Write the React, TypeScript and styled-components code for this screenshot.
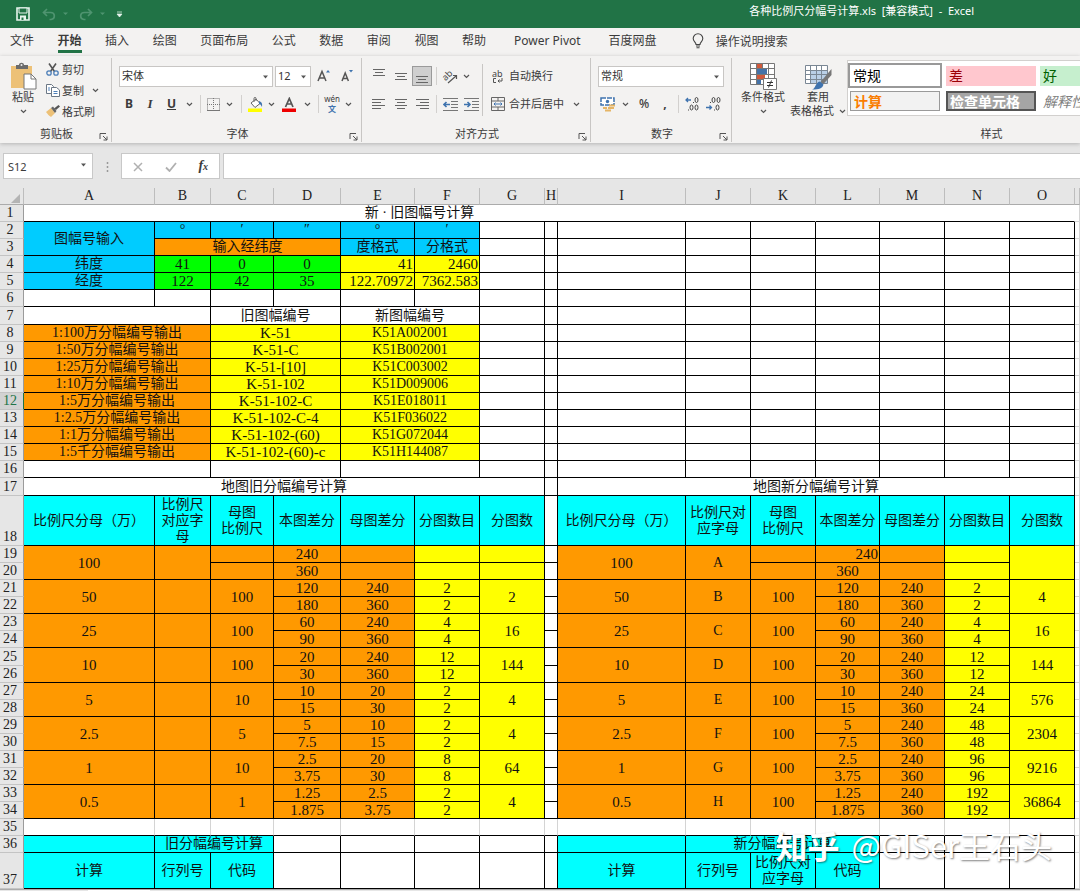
import React from "react";
import styled, { createGlobalStyle, css } from "styled-components";

const UI = '"Noto Sans", "Noto Sans CJK SC", sans-serif';
const SONG = '"Liberation Serif", "Noto Sans CJK SC", serif';

const GlobalStyle = createGlobalStyle`
  * { box-sizing: border-box; }
  body { margin: 0; background: #e6e6e6; font-family: ${UI}; color: #3b3b3b; }
  button, input, select { font: inherit; color: inherit; margin: 0; }
  button { padding: 0; border: 0; background: none; }
`;

const Page = styled.div`
  position: relative;
  display: flex;
  flex-direction: column;
  min-height: 100vh;
  overflow: hidden;
`;

/* ---------- title bar ---------- */
const TitleBar = styled.header`
  display: flex;
  align-items: center;
  height: 28px;
  padding-left: 16px;
  background: #217346;
  color: #fff;
`;
const QuickAccess = styled.div`
  display: flex;
  align-items: center;
  gap: 6px;
`;
const QuickButton = styled.button<{ $dim?: boolean; $lead?: number }>`
  display: flex;
  align-items: center;
  margin-left: ${(p) => p.$lead ?? 0}px;
  color: ${(p) => (p.$dim ? "#4f9470" : "#e8f5ee")};
`;
const DocTitle = styled.h1`
  flex: 1;
  margin: 0 106px 6px 0;
  text-align: right;
  font-size: 11px;
  line-height: 16px;
  font-weight: 400;
  white-space: pre;
`;

/* ---------- tabs ---------- */
const TabBar = styled.nav`
  display: flex;
  align-items: center;
  height: 28px;
  padding-left: 10px;
  background: #f3f2f1;
  font-size: 12px;
`;
const TabGroup = styled.div`
  display: flex;
  justify-content: space-between;
  width: 476px;
`;
const ExtraTabs = styled.div`
  display: flex;
  gap: 28px;
  margin-left: 28px;
`;
const Tab = styled.button<{ $active?: boolean }>`
  height: 22px;
  line-height: 18px;
  padding-top: 1px;
  border-bottom: 3px solid ${(p) => (p.$active ? "#217346" : "transparent")};
  font-weight: ${(p) => (p.$active ? 700 : 400)};
  white-space: nowrap;
`;
const TellMe = styled.button`
  display: flex;
  align-items: center;
  gap: 12px;
  height: 22px;
  padding-bottom: 2px;
  margin-left: 35px;
  white-space: nowrap;
`;

/* ---------- ribbon ---------- */
const Ribbon = styled.section`
  position: relative;
  display: flex;
  height: 87px;
  padding-top: 2px;
  background: #f3f2f1;
  box-shadow: 0 1px 4px #b4b4b4;
  font-size: 11px;
  line-height: 14px;
`;
const Group = styled.div<{ $w?: number }>`
  display: flex;
  flex-direction: column;
  flex: ${(p) => (p.$w ? `0 0 ${p.$w}px` : "1 0 0")};
  height: 84px;
  border-right: 1px solid ${(p) => (p.$w ? "#c8c6c4" : "transparent")};
`;
const GroupBody = styled.div`
  display: flex;
  flex: 1;
`;
const GroupFoot = styled.div<{ $lead?: number }>`
  display: flex;
  align-items: center;
  height: 16px;
  padding: 0 3px 0 ${(p) => p.$lead ?? 14}px;
  white-space: nowrap;
`;
const GroupLabel = styled.span`
  flex: 1;
  text-align: center;
`;
const Launcher = styled.button`
  display: flex;
  padding-top: 4px;
`;
const BigButton = styled.button<{ $w: number }>`
  display: flex;
  flex-direction: column;
  align-items: center;
  width: ${(p) => p.$w}px;
  height: 62px;
  padding-top: 4px;
  white-space: nowrap;
`;
const BigLabel = styled.span`
  display: flex;
  align-items: center;
  gap: 5px;
  height: 14px;
`;
const ClipList = styled.div`
  display: flex;
  flex-direction: column;
  gap: 4px;
  padding-top: 3px;
`;
const LabelButton = styled.button<{ $gap?: number }>`
  display: flex;
  align-items: center;
  gap: ${(p) => p.$gap ?? 2}px;
  height: 17px;
  white-space: nowrap;
`;
const Rows = styled.div<{ $pad: number }>`
  display: flex;
  flex-direction: column;
  gap: 8px;
  padding: 8px 0 0 ${(p) => p.$pad}px;
`;
const Row = styled.div<{ $gap?: number }>`
  display: flex;
  align-items: center;
  gap: ${(p) => p.$gap ?? 0}px;
  height: 20px;
`;
const Tool = styled.button<{ $w: number; $on?: boolean }>`
  display: flex;
  align-items: center;
  justify-content: center;
  width: ${(p) => p.$w}px;
  height: 20px;
  ${(p) => p.$on && css`
    background: #cfcfcf;
    border: 1px solid #9a9a9a;
  `}
`;
const Sep = styled.span<{ $w: number }>`
  display: flex;
  justify-content: center;
  width: ${(p) => p.$w}px;
  &::before {
    content: "";
    width: 1px;
    height: 18px;
    background: #d2d0ce;
  }
`;
const TallRule = styled.span`
  width: 1px;
  height: 52px;
  margin-top: 6px;
  background: #c8c6c4;
`;
const SelectBox = styled.label<{ $w: number }>`
  position: relative;
  display: flex;
  width: ${(p) => p.$w}px;
  height: 21px;
  border: 1px solid #c8c6c4;
  background: #fff;
  color: #333;
  select {
    appearance: none;
    width: 100%;
    padding: 0 12px 0 2px;
    border: 0;
    background: none;
    outline: 0;
  }
  svg {
    position: absolute;
    right: 3px;
    top: 8px;
    pointer-events: none;
  }
`;
const Glyph = styled.span<{ $kind?: "b" | "i" | "u" }>`
  font-size: 12px;
  font-weight: ${(p) => (p.$kind ? 700 : 500)};
  ${(p) => p.$kind === "i" && css`font-style: italic; font-family: "Liberation Serif", serif; font-size: 13px;`}
  ${(p) => p.$kind === "u" && css`text-decoration: underline;`}
`;
const Gallery = styled.div`
  display: grid;
  grid-template-columns: 94px 90px 90px;
  grid-template-rows: 25px 20px;
  gap: 3px 4px;
  align-items: center;
  flex: 1;
  height: 56px;
  margin: 2px 0 0 5px;
  padding: 2px 0 2px 0;
  border: 1px solid #d2d0ce;
  border-right: 0;
  background: #fff;
  overflow: hidden;
`;
const StyleCell = styled.button<{ $kind: string }>`
  height: 20px;
  padding-left: 3px;
  text-align: left;
  font: 14px/17px "Noto Sans CJK SC", sans-serif;
  white-space: nowrap;
  overflow: hidden;
  ${(p) => p.$kind === "normal" && css`height: 25px; color: #000; border: 2px solid #999; background: #fff;`}
  ${(p) => p.$kind === "bad" && css`color: #9c0006; background: #ffc7ce;`}
  ${(p) => p.$kind === "good" && css`color: #006100; background: #c6efce;`}
  ${(p) => p.$kind === "calc" && css`margin: 0 2px; color: #fa7d00; border: 1px solid #9a9a9a; background: #f2f2f2; font-weight: 700;`}
  ${(p) => p.$kind === "check" && css`color: #fff; border: 2px solid #555; background: #a5a5a5; font-weight: 700; padding-left: 2px; line-height: 15px;`}
  ${(p) => p.$kind === "note" && css`color: #7f7f7f; font-style: italic;`}
`;

/* ---------- formula bar ---------- */
const FormulaBar = styled.div`
  display: flex;
  height: 45px;
  padding: 10px 0 9px 3px;
`;
const NameBox = styled.div`
  position: relative;
  display: flex;
  width: 90px;
  border: 1px solid #c8c8c8;
  background: #fff;
  input {
    width: 100%;
    padding: 0 4px;
    border: 0;
    background: none;
    font-size: 11px;
  }
  svg {
    position: absolute;
    right: 5px;
    top: 9px;
  }
`;
const Dots = styled.span`
  display: flex;
  align-items: center;
  justify-content: center;
  width: 28px;
`;
const FxBox = styled.div`
  display: flex;
  align-items: center;
  justify-content: space-around;
  width: 99px;
  border: 1px solid #c8c8c8;
  background: #fff;
`;
const FormulaInput = styled.input`
  flex: 1;
  margin-left: 3px;
  border: 1px solid #c8c8c8;
  border-right: 0;
  background: #fff;
`;
const Fx = styled.button`
  font: italic 700 14px "Liberation Serif", serif;
  small { font-size: 10px; }
`;

/* ---------- sheet ---------- */
const Sheet = styled.table`
  width: 100%;
  table-layout: fixed;
  border-collapse: separate;
  border-spacing: 0;
  font-family: ${SONG};
  font-size: 14px;
  line-height: 16px;
  color: #111;
  th, td { padding: 0; overflow: hidden; }
`;
const Line = styled.tr<{ $h: number }>`
  height: ${(p) => p.$h}px;
`;
const ColHead = styled.th`
  border-right: 1px solid #bdbdbd;
  border-bottom: 1px solid #ababab;
  background: #e6e6e6;
  font: 400 14px/16px ${SONG};
  color: #222;
`;
const Corner = styled(ColHead)`
  vertical-align: bottom;
  svg { display: block; margin-left: 11px; }
`;
const RowHead = styled.th<{ $on?: boolean }>`
  border-right: 1px solid ${(p) => (p.$on ? "#217346" : "#9b9b9b")};
  border-bottom: 1px solid #c4c4c4;
  background: ${(p) => (p.$on ? "#d2d2d2" : "#e6e6e6")};
  color: ${(p) => (p.$on ? "#217346" : "#222")};
  font-size: 14px;
  font-weight: 400;
  vertical-align: bottom;
  && { padding-right: 3px; }
`;
const Cell = styled.td<{ $bg?: string; $kind: string; $right?: boolean; $faint?: boolean; $side?: string }>`
  background: ${(p) => p.$bg ?? "#fff"};
  border-right: 1px solid ${(p) => p.$side ?? (p.$faint ? "#d4d4d4" : "#000")};
  border-bottom: 1px solid ${(p) => (p.$faint ? "#d4d4d4" : "#000")};
  text-align: ${(p) => (p.$right ? "right" : "center")};
  vertical-align: middle;
  ${(p) => p.$kind === "num" && css`font-size: 15px;`}
  && { padding: 0 ${(p) => (p.$right ? 1 : 0)}px; }
`;

const BottomStrip = styled.footer`
  display: flex;
  flex: 1;
  min-height: 3px;
  padding-left: 88px;
  border-top: 1px solid #ababab;
  background: #e6e6e6;
`;
const SheetTab = styled.span`
  width: 62px;
  background: #fff;
`;
const Watermark = styled.div`
  position: absolute;
  right: 28px;
  bottom: 28px;
  display: flex;
  gap: 12px;
  color: #fff;
  font: 400 31px/38px "Noto Sans CJK SC", sans-serif;
  text-shadow: 1px 1px 2px rgba(0, 0, 0, 0.5);
  white-space: nowrap;
  pointer-events: none;
  b { font-size: 32px; }
`;

/* ---------- icons ---------- */
const Chevron = () => (
  <svg width="7" height="5" viewBox="0 0 7 5"><path d="M1 1l2.5 2.5L6 1" fill="none" stroke="#555" strokeWidth="1.2" /></svg>
);
const Triangle = () => (
  <svg width="7" height="4" viewBox="0 0 7 4"><path d="M1 0.5h5L3.5 3.5z" fill="#555" /></svg>
);
const LaunchIcon = () => (
  <svg width="9" height="9" viewBox="0 0 9 9" fill="none" stroke="#555"><path d="M1 7V1.5h6M4 4l4 4M8 4.5V8H4.5" /></svg>
);
const SaveIcon = () => (
  <svg width="14" height="14" viewBox="0 0 14 14"><path d="M1 1h12v12H1z" fill="none" stroke="currentColor" strokeWidth="1.6" /><path d="M3 1h8v5H3z" fill="#217346" stroke="currentColor" /><path d="M4 8.5h6V13H4z" fill="currentColor" /><path d="M5.5 10.5h2V13h-2z" fill="#217346" /></svg>
);
const UndoIcon = ({ flip }: { flip?: boolean }) => (
  <svg width="14" height="13" viewBox="0 0 14 13" fill="none" stroke="currentColor" strokeWidth="1.7"><path transform={flip ? "translate(14 0) scale(-1 1)" : undefined} d="M5 1L1.500 4.500 5 8M2 4.500h6.500c5 0 5 6.500.5 7H7.500" /></svg>
);
const SmallArrow = () => (
  <svg width="7" height="4"><path d="M1 .5h5L3.500 3z" fill="currentColor" /></svg>
);
const BulbIcon = () => (
  <svg width="12" height="16" viewBox="0 0 12 16" fill="none" stroke="#444" strokeWidth="1.1"><path d="M4 11.500C4 9 1.200 8.500 1.200 5.500a4.800 4.800 0 0 1 9.600 0C10.800 8.500 8 9 8 11.500zM4 13h4M4.500 14.700h3" /></svg>
);
const PasteIcon = () => (
  <svg width="27" height="28" viewBox="0 0 27 28"><path d="M1 4h21v22H1z" fill="#edc177" /><path d="M6 3h3c0-3 5-3 5 0h4v4H6z" fill="#6b6b6b" /><circle cx="11.500" cy="3" r="1" fill="#eee" /><path d="M14 12h7l5 5v10H14z" fill="#fff" stroke="#777" /><path d="M21 12v5h5" fill="none" stroke="#777" /></svg>
);
const ScissorsIcon = () => (
  <svg width="14" height="13" viewBox="0 0 14 13" fill="none"><path d="M3 0.500l5.500 8M10 0.500l-5.500 8" stroke="#555" strokeWidth="1.6" /><circle cx="3" cy="10" r="2.200" stroke="#4d7fb8" strokeWidth="1.3" /><circle cx="10" cy="10" r="2.200" stroke="#4d7fb8" strokeWidth="1.3" /></svg>
);
const CopyIcon = () => (
  <svg width="14" height="13" viewBox="0 0 14 13" fill="#fff" stroke="#6b7785"><path d="M.5.500h5l2 2v7h-7z" /><path d="M5.500 3.500h5l3 2.500v6.500h-8z" /><path d="M2 4h2M2 6h2M7.500 7.500h4M7.500 9.500h4" stroke="#4d7fb8" /></svg>
);
const BrushIcon = () => (
  <svg width="14" height="13" viewBox="0 0 14 13"><path d="M0 7l5-4 4 5-4 4-2-1.500-1-1z" fill="#edc177" /><path d="M5 3l2-1.500L10.500 6 9 8z" fill="#666" /><path d="M8 3.500L12.500 0 14 1.500 10 5z" fill="#555" /></svg>
);
const GrowIcon = ({ down }: { down?: boolean }) => (
  <svg width="14" height="14" viewBox="0 0 14 14" fill="none"><path d={down ? "M2 12L5.200 4l3.200 8M3.200 9.500h4" : "M1 12L5 2.500 9 12M2.500 9h5"} stroke="#555" strokeWidth="1.5" /><path d={down ? "M9 1h4l-2 2.500z" : "M9 3.500h4L11 1z"} fill="#3f73ae" /></svg>
);
const BorderIcon = () => (
  <svg width="13" height="13" viewBox="0 0 13 13" fill="none" stroke="#777"><path d="M.5.500h12v12H.5zM6.500 0v13M0 6.500h13" strokeDasharray="1 1" /><path d="M0 12.500h13" /></svg>
);
const FillIcon = () => (
  <svg width="15" height="15" viewBox="0 0 15 15"><path d="M3 6l5-4 4 4.500-5 4z" fill="#fff" stroke="#666" /><path d="M6 5V1.500C6 0 8 0 8 1.500V4" fill="none" stroke="#666" /><path d="M11 4c3 1 3.500 3 3 6-1-2-1.500-3-3-3z" fill="#3f73ae" /><path d="M0 11.500h14V15H0z" fill="#ff0" /></svg>
);
const FontColorIcon = () => (
  <svg width="15" height="15" viewBox="0 0 15 15"><path d="M3.500 10L7.300 1.500 11 10M5 7h5" fill="none" stroke="#555" strokeWidth="1.7" /><path d="M0 11.500h14V15H0z" fill="#e00" /></svg>
);
const Phonetic = styled.span`
  display: flex;
  flex-direction: column;
  align-items: center;
  font-size: 8px;
  line-height: 9px;
  b { font-size: 8px; line-height: 11px; color: #3f73ae; }
`;
const LinesIcon = ({ d }: { d: string }) => (
  <svg width="14" height="14" viewBox="0 0 14 14" fill="none" stroke="#666"><path d={d} /></svg>
);
const RotatedAbIcon = () => (
  <svg width="18" height="18" viewBox="0 0 18 18"><text x="2" y="12" fontSize="9" fontFamily="Noto Sans" fill="#444" transform="rotate(-45 6 10)">ab</text><path d="M7 16l8-7M15.500 12V8.500H12" fill="none" stroke="#555" strokeWidth="1.2" /></svg>
);
const IndentIcon = ({ right }: { right?: boolean }) => (
  <svg width="15" height="13" viewBox="0 0 15 13" fill="none"><path d="M0 .5h15M8 3.500h7M8 6.500h7M8 9.500h7M0 12.500h15" stroke="#777" /><path d={right ? "M0 6.500h6M3.500 4L6 6.500 3.500 9" : "M1 6.500h6M3.500 4L1 6.500 3.500 9"} stroke="#3f73ae" strokeWidth="1.6" /></svg>
);
const WrapIcon = () => (
  <svg width="14" height="18" viewBox="0 0 14 18"><text x="1" y="10" fontSize="9" fontFamily="Noto Sans" fill="#444">ab</text><path d="M5 11.500H2.500v4H5M11 11v3H7M8.500 12.500L7 14l1.500 1.500" fill="none" stroke="#555" /></svg>
);
const MergeIcon = () => (
  <svg width="14" height="14" viewBox="0 0 14 14" fill="none" stroke="#666"><path d="M.5.500h13v13H.5zM.5 4h13M.5 10h13M7 .5V4M7 10v3.500" /><path d="M3 7h8M4.500 5.500L3 7l1.500 1.500M9.500 5.500L11 7 9.500 8.500" stroke="#3f73ae" /></svg>
);
const MoneyIcon = () => (
  <svg width="16" height="15" viewBox="0 0 16 15" fill="none"><path d="M1 1h13v7H1z" fill="#fff" stroke="#3f73ae" strokeWidth="1.5" strokeDasharray="5 1" /><circle cx="7.500" cy="4.500" r="1.700" fill="#3f73ae" /><path d="M9 8.500h6M8 11h6M3 11h4M5 13.500h6" stroke="#e6b566" strokeWidth="2" /></svg>
);
const DecimalIcon = ({ more }: { more?: boolean }) => {
  const digits: [number, number][] = more ? [[11.5, 3], [6.5, 10.5], [11.5, 10.5]] : [[7.5, 3], [12.5, 3], [11.5, 10.5]];
  const points: [number, number][] = more ? [[8, 5], [3, 12.5]] : [[4, 5], [8, 12.5]];
  return (
    <svg width="15" height="14" viewBox="0 0 15 14" fill="none">
      {digits.map(([x, y], i) => <ellipse key={i} cx={x} cy={y} rx="1.5" ry="2.5" stroke="#444" />)}
      {points.map(([x, y], i) => <rect key={i} x={x} y={y} width="1" height="1" fill="#444" />)}
      <path d={more ? "M1 3h5M3 1L1 3l2 2" : "M0 10.500h5.500M3.500 8.500l2 2-2 2"} stroke="#3f73ae" strokeWidth="1.3" />
    </svg>
  );
};
const CondIcon = () => (
  <svg width="28" height="28" viewBox="0 0 28 28"><path d="M1.500 1.500h24v21h-24z" fill="#fff" /><path d="M8 2h6v5H8zM8 12h6v5H8zM14 12h2v5h-2z" fill="#d0593c" /><path d="M8 7h10v5H8zM8 17h4v5H8z" fill="#4472a8" /><path d="M1.500 1.500h24v21h-24zM7.500 1v22M13.500 1v6M19.500 1v22M1 6.500h25M1 12.500h25M1 17.500h14" fill="none" stroke="#777" /><path d="M14.500 16.500h13v11h-13z" fill="#fff" stroke="#777" /><path d="M18 20.500h6M18 23.500h6M22.500 18.500l-3 7" stroke="#333" /></svg>
);
const TableFormatIcon = () => (
  <svg width="28" height="28" viewBox="0 0 28 28"><path d="M1.500 3.500h21v18h-21z" fill="#fff" /><path d="M7 8h16v14H7z" fill="#b9cfe6" /><path d="M1.500 3.500h22v18h-22zM6.500 3v19M12.500 3v19M17.500 3v19M1 8.500h23M1 12.500h23M1 17.500h23" fill="none" stroke="#7a8794" /><path d="M27.500 7v6l-8 9-3-2z" fill="#777" /><path d="M16 19.500l3.500 3c-1 4-4 5-11.500 5 4-1 3-7 8-8z" fill="#3f73ae" /></svg>
);

/* ---------- sheet data ---------- */
type C = { t?: React.ReactNode; cs?: number; rs?: number; bg?: string; right?: boolean; faint?: boolean; side?: string; size?: string };
const BLUE = "#00ccff", ORANGE = "#ff9900", GREEN = "#00ff00", YELLOW = "#ffff00", CYAN = "#00ffff";
const blank = (n: number, extra: C = {}): C[] => Array.from({ length: n }, () => ({ ...extra }));
const edge: C = { faint: true };

const widths = [24, 131, 56, 63, 67, 74, 65, 65, 13, 128, 65, 65, 64, 65, 65, 65];
const tallRows: Record<number, number> = { 7: 18, 17: 18, 18: 50, 25: 18, 37: 36 };

const outputs: [string, string, string][] = [
  ["1:100万分幅编号输出", "K-51", "K51A002001"],
  ["1:50万分幅编号输出", "K-51-C", "K51B002001"],
  ["1:25万分幅编号输出", "K-51-[10]", "K51C003002"],
  ["1:10万分幅编号输出", "K-51-102", "K51D009006"],
  ["1:5万分幅编号输出", "K-51-102-C", "K51E018011"],
  ["1:2.5万分幅编号输出", "K-51-102-C-4", "K51F036022"],
  ["1:1万分幅编号输出", "K-51-102-(60)", "K51G072044"],
  ["1:5千分幅编号输出", "K-51-102-(60)-c", "K51H144087"],
];

const parentScale = <>母图<br />比例尺</>;
const heads = ["比例尺分母（万）", "比例尺对应字母", parentScale, "本图差分", "母图差分", "分图数目", "分图数"];

/* scale, own pair, parent scale, parent pair, sheet count, total | letter, sheet count, total */
const scales: [string, string, string, string, string, string, string, string, string, string, string][] = [
  ["50", "120", "180", "100", "240", "360", "2", "2", "B", "2", "4"],
  ["25", "60", "90", "100", "240", "360", "4", "16", "C", "4", "16"],
  ["10", "20", "30", "100", "240", "360", "12", "144", "D", "12", "144"],
  ["5", "10", "15", "10", "20", "30", "2", "4", "E", "24", "576"],
  ["2.5", "5", "7.5", "5", "10", "15", "2", "4", "F", "48", "2304"],
  ["1", "2.5", "3.75", "10", "20", "30", "8", "64", "G", "96", "9216"],
  ["0.5", "1.25", "1.875", "1", "2.5", "3.75", "2", "4", "H", "192", "36864"],
];

const o = (t?: string, rs = 1): C => ({ t, rs, bg: ORANGE });
const y = (t?: string, rs = 1): C => ({ t, rs, bg: YELLOW });
const c = (t?: React.ReactNode, cs = 1): C => ({ t, cs, bg: CYAN });

const rows: C[][] = [
  [{ t: "新 · 旧图幅号计算", cs: 11, side: "#fff" }, { cs: 4, side: "#fff" }, edge],
  [{ t: "图幅号输入", rs: 2, bg: BLUE }, ...["°", "′", "″", "°", "′"].map((t) => ({ t, bg: BLUE })), ...blank(9), edge],
  [{ t: "输入经纬度", cs: 3, bg: ORANGE }, { t: "度格式", bg: BLUE }, { t: "分格式", bg: BLUE }, ...blank(9), edge],
  [{ t: "纬度", bg: BLUE }, ...["41", "0", "0"].map((t) => ({ t, bg: GREEN })), { ...y("41"), right: true }, { ...y("2460"), right: true }, ...blank(9), edge],
  [{ t: "经度", bg: BLUE }, ...["122", "42", "35"].map((t) => ({ t, bg: GREEN })), { ...y("122.70972"), right: true }, { ...y("7362.583"), right: true }, ...blank(9), edge],
  [...blank(15), edge],
  [{ cs: 2 }, { t: "旧图幅编号", cs: 2 }, { t: "新图幅编号", cs: 2 }, ...blank(9), edge],
  ...outputs.map(([a, b, d]): C[] => [
    { t: a, cs: 2, bg: ORANGE }, { t: b, cs: 2, bg: YELLOW, size: "num" }, { t: d, cs: 2, bg: YELLOW }, ...blank(9), edge,
  ]),
  [{ cs: 2 }, { cs: 2 }, { cs: 2 }, ...blank(9), edge],
  [{ t: "地图旧分幅编号计算", cs: 7 }, {}, { t: "地图新分幅编号计算", cs: 7 }, edge],
  [...heads.map((t) => c(t)), {}, ...heads.map((t) => c(t)), edge],
  [o("100", 2), o("", 2), o(), o("240"), o(), y(), y(), {}, o("100", 2), o("A", 2), o(), { ...o("240"), right: true }, o(), y(), y("", 2), edge],
  [o(), o("360"), o(), y(), y(), {}, o(), o("360"), o(), y(), edge],
  ...scales.flatMap(([s, d1, d2, p, e1, e2, f, g, l, n, q]): C[][] => [
    [o(s, 2), o("", 2), o(p, 2), o(d1), o(e1), y(f), y(g, 2), {}, o(s, 2), o(l, 2), o("100", 2), o(d1), o("240"), y(n), y(q, 2), edge],
    [o(d2), o(e2), y(f), {}, o(d2), o("360"), y(n), edge],
  ]),
  [...blank(15, { side: "#d4d4d4" }), edge],
  [c(), c("旧分幅编号计算", 2), ...blank(5), c(), c("新分幅编号计算", 3), ...blank(3), edge],
  [c("计算"), c("行列号"), c("代码"), ...blank(5), c("计算"), c("行列号"), c("比例尺对应字母"), c("代码"), ...blank(3), edge],
];

const kindOf = (cell: C) => cell.size ?? (typeof cell.t === "string" && /^[\d.]+$/.test(cell.t) ? "num" : "text");

const tabs = ["文件", "开始", "插入", "绘图", "页面布局", "公式", "数据", "审阅", "视图", "帮助"];

const Foot = ({ label }: { label: string }) => (
  <GroupFoot>
    <GroupLabel>{label}</GroupLabel>
    <Launcher aria-label={`${label}设置`}><LaunchIcon /></Launcher>
  </GroupFoot>
);
const Drop = ({ w = 14 }: { w?: number }) => <Tool $w={w} aria-label="更多"><Chevron /></Tool>;
const Picker = ({ label, value, w }: { label: string; value: string; w: number }) => (
  <SelectBox $w={w}>
    <select aria-label={label} defaultValue={value}><option>{value}</option></select>
    <Triangle />
  </SelectBox>
);

export default function App() {
  return (
    <Page>
      <GlobalStyle />
      <TitleBar>
        <QuickAccess>
          <QuickButton aria-label="保存"><SaveIcon /></QuickButton>
          <QuickButton $dim $lead={6} aria-label="撤消"><UndoIcon /></QuickButton>
          <QuickButton $dim aria-label="撤消列表"><SmallArrow /></QuickButton>
          <QuickButton $dim $lead={4} aria-label="恢复"><UndoIcon flip /></QuickButton>
          <QuickButton $dim aria-label="恢复列表"><SmallArrow /></QuickButton>
          <QuickButton $lead={4} aria-label="自定义"><svg width="7" height="7"><path d="M1 1h5M1 3h5L3.500 6z" fill="currentColor" stroke="currentColor" strokeWidth=".7" /></svg></QuickButton>
        </QuickAccess>
        <DocTitle>{"各种比例尺分幅号计算.xls  [兼容模式]  -  Excel"}</DocTitle>
      </TitleBar>

      <TabBar>
        <TabGroup>{tabs.map((t) => <Tab key={t} $active={t === "开始"}>{t}</Tab>)}</TabGroup>
        <ExtraTabs><Tab>Power Pivot</Tab><Tab>百度网盘</Tab></ExtraTabs>
        <TellMe><BulbIcon />操作说明搜索</TellMe>
      </TabBar>

      <Ribbon>
        <Group $w={112}>
          <GroupBody>
            <BigButton $w={46}><PasteIcon /><BigLabel>粘贴</BigLabel><BigLabel><Chevron /></BigLabel></BigButton>
            <ClipList>
              <LabelButton><ScissorsIcon />剪切</LabelButton>
              <LabelButton><CopyIcon />复制<Drop w={18} /></LabelButton>
              <LabelButton><BrushIcon />格式刷</LabelButton>
            </ClipList>
          </GroupBody>
          <Foot label="剪贴板" />
        </Group>

        <Group $w={250}>
          <GroupBody>
            <Rows $pad={7}>
              <Row $gap={2}>
                <Picker label="字体" value="宋体" w={154} />
                <Picker label="字号" value="12" w={36} />
                <Tool $w={22} aria-label="增大字号"><GrowIcon /></Tool>
                <Tool $w={20} aria-label="减小字号"><GrowIcon down /></Tool>
              </Row>
              <Row>
                <Tool $w={20}><Glyph $kind="b">B</Glyph></Tool>
                <Tool $w={22}><Glyph $kind="i">I</Glyph></Tool>
                <Tool $w={21}><Glyph $kind="u">U</Glyph></Tool>
                <Drop /><Sep $w={8} />
                <Tool $w={18} aria-label="边框"><BorderIcon /></Tool><Drop /><Sep $w={10} />
                <Tool $w={18} aria-label="填充颜色"><FillIcon /></Tool><Drop />
                <Tool $w={22} aria-label="字体颜色"><FontColorIcon /></Tool><Drop /><Sep $w={8} />
                <Tool $w={20}><Phonetic>wén<b>文</b></Phonetic></Tool><Drop w={12} />
              </Row>
            </Rows>
          </GroupBody>
          <Foot label="字体" />
        </Group>

        <Group $w={229}>
          <GroupBody>
            <Rows $pad={6}>
              <Row>
                <Tool $w={22} aria-label="顶端对齐"><LinesIcon d="M1 0.500h12M3 3.500h8M1 6.500h12" /></Tool>
                <Tool $w={22} aria-label="垂直居中"><LinesIcon d="M1 4.500h12M3 7.500h8M1 10.500h12" /></Tool>
                <Tool $w={20} $on aria-label="底端对齐"><LinesIcon d="M1 7.500h12M3 10.500h8M1 13.500h12" /></Tool>
                <Sep $w={8} />
                <Tool $w={20} aria-label="方向"><RotatedAbIcon /></Tool><Drop w={12} />
              </Row>
              <Row>
                <Tool $w={22} aria-label="左对齐"><LinesIcon d="M0 2.500h13M0 5.500h9M0 8.500h13M0 11.500h9" /></Tool>
                <Tool $w={22} aria-label="居中"><LinesIcon d="M1 2.500h12M3 5.500h8M1 8.500h12M3 11.500h8" /></Tool>
                <Tool $w={20} aria-label="右对齐"><LinesIcon d="M1 2.500h13M5 5.500h9M1 8.500h13M5 11.500h9" /></Tool>
                <Sep $w={8} />
                <Tool $w={20} aria-label="减少缩进量"><IndentIcon /></Tool>
                <Tool $w={22} aria-label="增加缩进量"><IndentIcon right /></Tool>
              </Row>
            </Rows>
            <TallRule />
            <Rows $pad={8}>
              <Row><LabelButton $gap={4}><WrapIcon />自动换行</LabelButton></Row>
              <Row><LabelButton $gap={4}><MergeIcon />合并后居中</LabelButton><Drop w={24} /></Row>
            </Rows>
          </GroupBody>
          <Foot label="对齐方式" />
        </Group>

        <Group $w={141}>
          <GroupBody>
            <Rows $pad={7}>
              <Row><Picker label="数字格式" value="常规" w={126} /></Row>
              <Row>
                <Tool $w={20} aria-label="会计数字格式"><MoneyIcon /></Tool><Drop />
                <Tool $w={24}><Glyph>%</Glyph></Tool>
                <Tool $w={18}><Glyph $kind="b">,</Glyph></Tool>
                <Sep $w={8} />
                <Tool $w={20} aria-label="增加小数位数"><DecimalIcon more /></Tool>
                <Tool $w={22} aria-label="减少小数位数"><DecimalIcon /></Tool>
              </Row>
            </Rows>
          </GroupBody>
          <Foot label="数字" />
        </Group>

        <Group>
          <GroupBody>
            <BigButton $w={62}><CondIcon /><BigLabel>条件格式</BigLabel><BigLabel><Chevron /></BigLabel></BigButton>
            <BigButton $w={48}><TableFormatIcon /><BigLabel>套用</BigLabel><BigLabel>表格格式<Chevron /></BigLabel></BigButton>
            <Gallery>
              <StyleCell $kind="normal">常规</StyleCell>
              <StyleCell $kind="bad">差</StyleCell>
              <StyleCell $kind="good">好</StyleCell>
              <StyleCell $kind="calc">计算</StyleCell>
              <StyleCell $kind="check">检查单元格</StyleCell>
              <StyleCell $kind="note">解释性文本</StyleCell>
            </Gallery>
          </GroupBody>
          <GroupFoot $lead={124}><GroupLabel>样式</GroupLabel></GroupFoot>
        </Group>
      </Ribbon>

      <FormulaBar>
        <NameBox><input aria-label="名称框" defaultValue="S12" /><Triangle /></NameBox>
        <Dots><svg width="3" height="11"><path d="M1.500 1v2M1.500 5v2M1.500 9v2" stroke="#999" strokeWidth="1.5" /></svg></Dots>
        <FxBox>
          <button aria-label="取消"><svg width="10" height="10"><path d="M1 1l8 8M9 1L1 9" stroke="#b0b0b0" strokeWidth="1.5" /></svg></button>
          <button aria-label="输入"><svg width="12" height="10"><path d="M1 5.500l3.500 3.500L11 1" fill="none" stroke="#b0b0b0" strokeWidth="1.8" /></svg></button>
          <Fx aria-label="插入函数">f<small>x</small></Fx>
        </FxBox>
        <FormulaInput aria-label="编辑栏" />
      </FormulaBar>

      <Sheet>
        <colgroup>
          {widths.map((w, i) => <col key={i} style={{ width: w }} />)}
          <col />
        </colgroup>
        <thead>
          <Line $h={17}>
            <Corner><svg width="10" height="10"><path d="M9 0v9H0z" fill="#b4b4b4" /></svg></Corner>
            {"ABCDEFGHIJKLMNO".split("").map((l) => <ColHead key={l} scope="col">{l}</ColHead>)}
            <ColHead />
          </Line>
        </thead>
        <tbody>
          {rows.map((cells, r) => (
            <Line key={r} $h={tallRows[r + 1] ?? 17}>
              <RowHead scope="row" $on={r + 1 === 12}>{r + 1}</RowHead>
              {cells.map((cell, i) => (
                <Cell key={i} colSpan={cell.cs} rowSpan={cell.rs} $bg={cell.bg} $kind={kindOf(cell)} $right={cell.right} $faint={cell.faint} $side={cell.side}>
                  {cell.t}
                </Cell>
              ))}
            </Line>
          ))}
        </tbody>
      </Sheet>

      <BottomStrip><SheetTab /></BottomStrip>
      <Watermark><b>知乎</b><span>@GISer王石头</span></Watermark>
    </Page>
  );
}
